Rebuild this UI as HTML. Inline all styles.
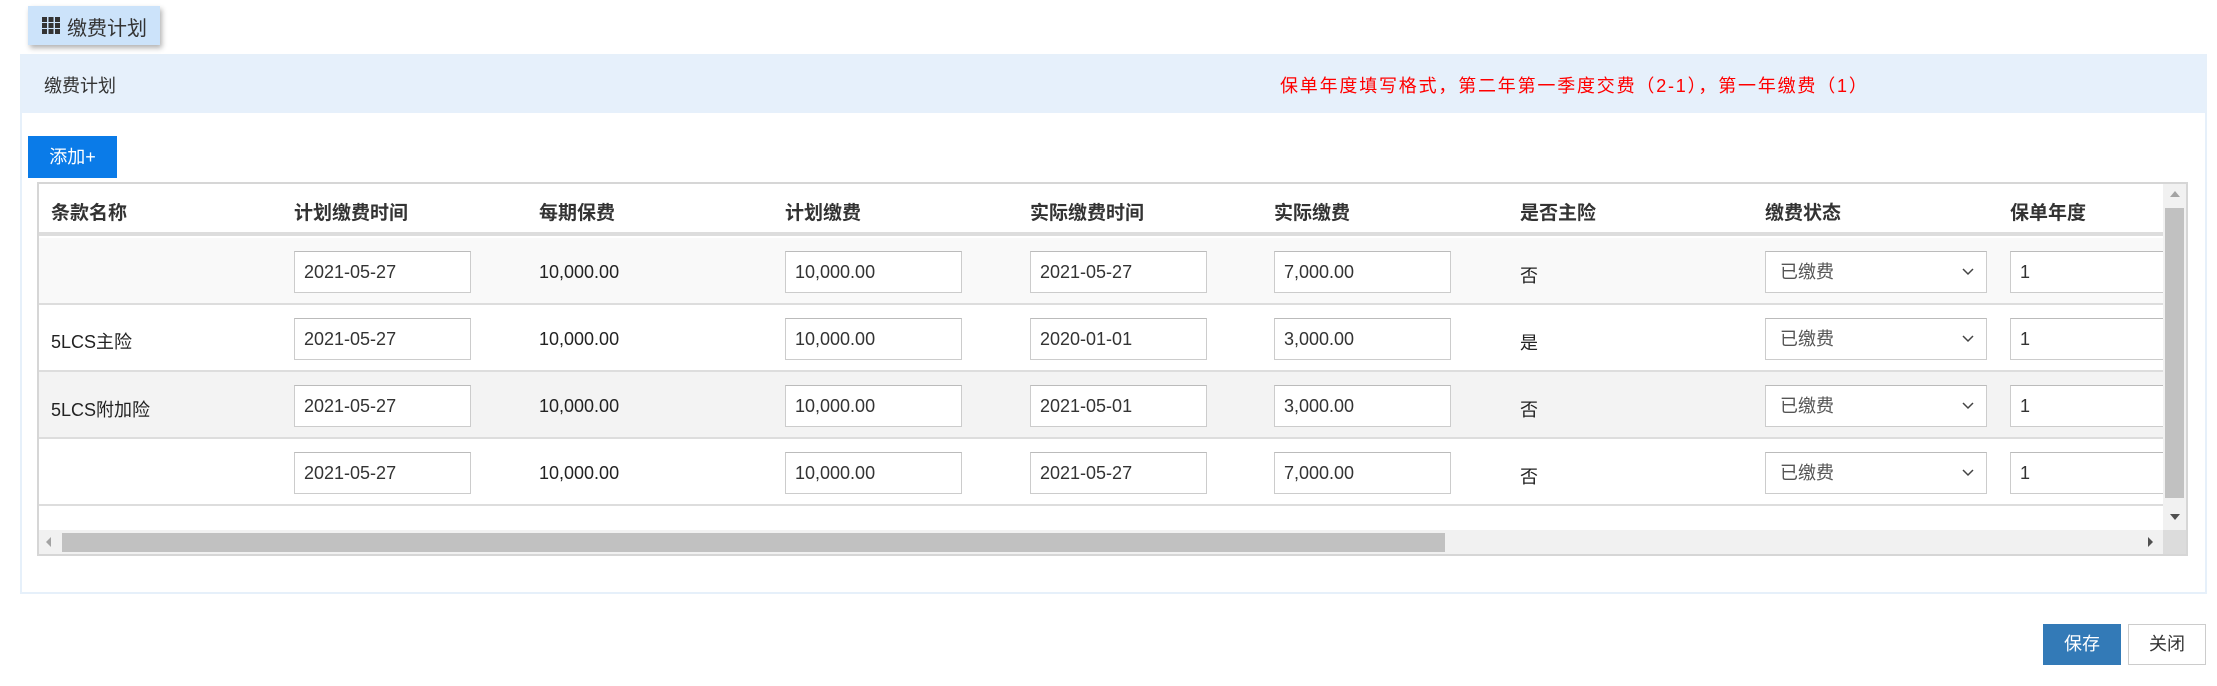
<!DOCTYPE html>
<html><head><meta charset="utf-8"><style>
*{box-sizing:border-box;margin:0;padding:0}
body{width:2217px;height:686px;background:#fff;position:relative;overflow:hidden;font-family:"Liberation Sans","Noto Sans CJK SC",sans-serif;color:#333;font-size:18px}
.a{position:absolute}
.inp{position:absolute;height:42px;border:1px solid #ccc;background:#fff;font-size:18px;line-height:40px;padding-left:9px;color:#333;border-top-color:#bbb}
.th{position:absolute;top:198px;font-weight:bold;font-size:19px;color:#333}
.txt{position:absolute;font-size:18px;color:#222}
.chev{position:absolute;right:12px;top:16px}
</style></head><body>
<div class="a" style="left:28px;top:6px;width:132px;height:39px;background:#cce3fa;box-shadow:2px 3px 5px rgba(0,0,0,.3)"></div>
<svg class="a" style="left:42px;top:17px" width="18" height="17" viewBox="0 0 18 17"><g fill="#333"><rect x="0" y="0" width="5" height="5"/><rect x="6.5" y="0" width="5" height="5"/><rect x="13" y="0" width="5" height="5"/><rect x="0" y="6" width="5" height="5"/><rect x="6.5" y="6" width="5" height="5"/><rect x="13" y="6" width="5" height="5"/><rect x="0" y="12" width="5" height="5"/><rect x="6.5" y="12" width="5" height="5"/><rect x="13" y="12" width="5" height="5"/></g></svg>
<div class="a" style="left:67px;top:12px;font-size:20px;color:#333">缴费计划</div>

<div class="a" style="left:20px;top:54px;width:2187px;height:540px;border:2px solid #e6f0fa"></div>
<div class="a" style="left:22px;top:56px;width:2183px;height:57px;background:#e6f0fb"></div>
<div class="a" style="left:44px;top:72px;font-size:18px;color:#333">缴费计划</div>
<div class="a" style="left:1280px;top:72px;font-size:18px;color:#f00;letter-spacing:1.8px">保单年度填写格式，第二年第一季度交费（2-1），第一年缴费（1）</div>

<div class="a" style="left:28px;top:136px;width:89px;height:42px;background:#0a7be8;color:#fff;font-size:18px;line-height:42px;text-align:center">添加+</div>

<div class="a" style="left:37px;top:182px;width:2151px;height:374px;border:2px solid #d6d6d6;background:#fff"></div>
<div class="a" style="left:39px;top:184px;width:2124px;height:52px;background:#fff;border-bottom:4px solid #ddd"></div>
<div class="a" style="left:39px;top:238px;width:2124px;height:67px;background:#f9f9f9;border-bottom:2px solid #ddd"></div>
<div class="a" style="left:39px;top:305px;width:2124px;height:67px;background:#fff;border-bottom:2px solid #ddd"></div>
<div class="a" style="left:39px;top:372px;width:2124px;height:67px;background:#f3f3f3;border-bottom:2px solid #ddd"></div>
<div class="a" style="left:39px;top:439px;width:2124px;height:67px;background:#fff;border-bottom:2px solid #ddd"></div>

<div class="th" style="left:51px">条款名称</div>
<div class="th" style="left:294px">计划缴费时间</div>
<div class="th" style="left:539px">每期保费</div>
<div class="th" style="left:785px">计划缴费</div>
<div class="th" style="left:1030px">实际缴费时间</div>
<div class="th" style="left:1274px">实际缴费</div>
<div class="th" style="left:1520px">是否主险</div>
<div class="th" style="left:1765px">缴费状态</div>
<div class="th" style="left:2010px">保单年度</div>

<!-- row 1 -->
<div class="inp" style="left:294px;top:251px;width:177px">2021-05-27</div>
<div class="txt" style="left:539px;top:262px">10,000.00</div>
<div class="inp" style="left:785px;top:251px;width:177px">10,000.00</div>
<div class="inp" style="left:1030px;top:251px;width:177px">2021-05-27</div>
<div class="inp" style="left:1274px;top:251px;width:177px">7,000.00</div>
<div class="txt" style="left:1520px;top:262px">否</div>
<div class="inp" style="left:1765px;top:251px;width:222px;padding-left:14px;color:#555">已缴费<svg class="chev" width="12" height="8" viewBox="0 0 12 8"><path d="M1 1l5 5 5-5" fill="none" stroke="#444" stroke-width="1.5"/></svg></div>
<div class="inp" style="left:2010px;top:251px;width:160px">1</div>
<!-- row 2 -->
<div class="txt" style="left:51px;top:328px">5LCS主险</div>
<div class="inp" style="left:294px;top:318px;width:177px">2021-05-27</div>
<div class="txt" style="left:539px;top:329px">10,000.00</div>
<div class="inp" style="left:785px;top:318px;width:177px">10,000.00</div>
<div class="inp" style="left:1030px;top:318px;width:177px">2020-01-01</div>
<div class="inp" style="left:1274px;top:318px;width:177px">3,000.00</div>
<div class="txt" style="left:1520px;top:329px">是</div>
<div class="inp" style="left:1765px;top:318px;width:222px;padding-left:14px;color:#555">已缴费<svg class="chev" width="12" height="8" viewBox="0 0 12 8"><path d="M1 1l5 5 5-5" fill="none" stroke="#444" stroke-width="1.5"/></svg></div>
<div class="inp" style="left:2010px;top:318px;width:160px">1</div>
<!-- row 3 -->
<div class="txt" style="left:51px;top:396px">5LCS附加险</div>
<div class="inp" style="left:294px;top:385px;width:177px">2021-05-27</div>
<div class="txt" style="left:539px;top:396px">10,000.00</div>
<div class="inp" style="left:785px;top:385px;width:177px">10,000.00</div>
<div class="inp" style="left:1030px;top:385px;width:177px">2021-05-01</div>
<div class="inp" style="left:1274px;top:385px;width:177px">3,000.00</div>
<div class="txt" style="left:1520px;top:396px">否</div>
<div class="inp" style="left:1765px;top:385px;width:222px;padding-left:14px;color:#555">已缴费<svg class="chev" width="12" height="8" viewBox="0 0 12 8"><path d="M1 1l5 5 5-5" fill="none" stroke="#444" stroke-width="1.5"/></svg></div>
<div class="inp" style="left:2010px;top:385px;width:160px">1</div>
<!-- row 4 -->
<div class="inp" style="left:294px;top:452px;width:177px">2021-05-27</div>
<div class="txt" style="left:539px;top:463px">10,000.00</div>
<div class="inp" style="left:785px;top:452px;width:177px">10,000.00</div>
<div class="inp" style="left:1030px;top:452px;width:177px">2021-05-27</div>
<div class="inp" style="left:1274px;top:452px;width:177px">7,000.00</div>
<div class="txt" style="left:1520px;top:463px">否</div>
<div class="inp" style="left:1765px;top:452px;width:222px;padding-left:14px;color:#555">已缴费<svg class="chev" width="12" height="8" viewBox="0 0 12 8"><path d="M1 1l5 5 5-5" fill="none" stroke="#444" stroke-width="1.5"/></svg></div>
<div class="inp" style="left:2010px;top:452px;width:160px">1</div>

<!-- vertical scrollbar -->
<div class="a" style="left:2163px;top:184px;width:23px;height:346px;background:#f1f1f1"></div>
<div class="a" style="left:2165px;top:208px;width:19px;height:290px;background:#c1c1c1"></div>
<div class="a" style="left:2170px;top:191px;width:0;height:0;border-left:5px solid transparent;border-right:5px solid transparent;border-bottom:6px solid #a3a3a3"></div>
<div class="a" style="left:2170px;top:514px;width:0;height:0;border-left:5px solid transparent;border-right:5px solid transparent;border-top:6px solid #505050"></div>
<!-- horizontal scrollbar -->
<div class="a" style="left:39px;top:530px;width:2124px;height:24px;background:#f1f1f1"></div>
<div class="a" style="left:62px;top:533px;width:1383px;height:19px;background:#c1c1c1"></div>
<div class="a" style="left:46px;top:537px;width:0;height:0;border-top:5px solid transparent;border-bottom:5px solid transparent;border-right:5px solid #a3a3a3"></div>
<div class="a" style="left:2148px;top:537px;width:0;height:0;border-top:5px solid transparent;border-bottom:5px solid transparent;border-left:5px solid #505050"></div>
<div class="a" style="left:2163px;top:530px;width:23px;height:24px;background:#dcdcdc"></div>

<div class="a" style="left:2043px;top:624px;width:78px;height:41px;background:#337ab7;color:#fff;font-size:18px;line-height:41px;text-align:center">保存</div>
<div class="a" style="left:2128px;top:624px;width:78px;height:41px;background:#fff;border:1px solid #ccc;color:#333;font-size:18px;line-height:39px;text-align:center">关闭</div>
</body></html>
